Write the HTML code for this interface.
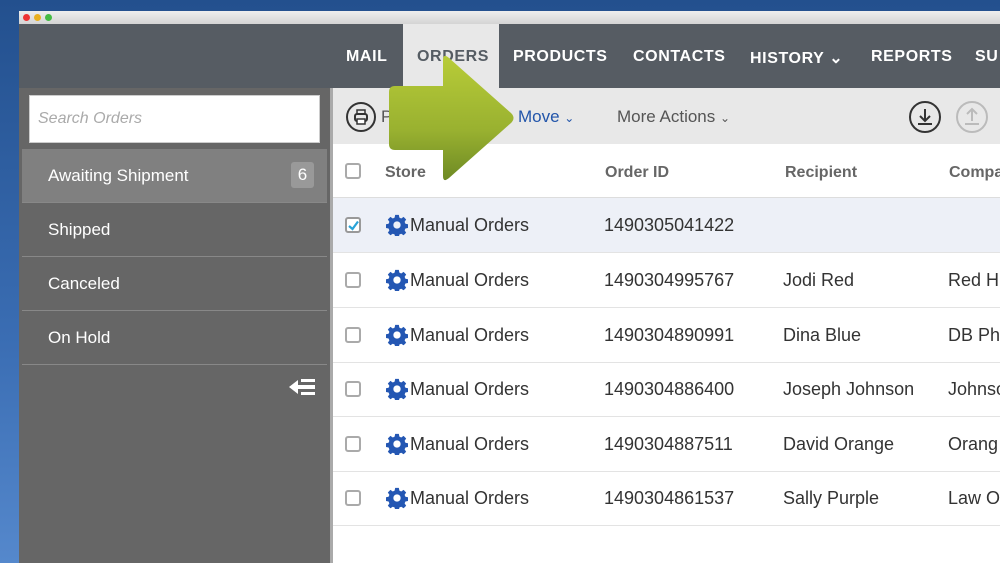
<!DOCTYPE html>
<html><head><style>
*{margin:0;padding:0;box-sizing:border-box}
html,body{width:1000px;height:563px;overflow:hidden}
body{position:relative;background:linear-gradient(#23508e,#3a6db3 60%,#5588cc);font-family:"Liberation Sans",sans-serif}
.win{position:absolute;left:19px;top:11px;width:981px;height:552px;background:#fff;overflow:hidden}
.title{position:absolute;left:0;top:0;width:100%;height:13px;background:linear-gradient(#eee,#d4d4d4)}
.dot{position:absolute;top:3px;width:7px;height:7px;border-radius:50%}
.nav{position:absolute;left:0;top:13px;width:100%;height:64px;background:#565c63}
.nav span{position:absolute;top:24px;color:#fff;font-weight:bold;font-size:16px;letter-spacing:0.6px}
.tab{position:absolute;left:384px;top:0;width:96px;height:64px;background:#e8e8e8}
.side{position:absolute;left:0;top:77px;width:311px;height:490px;background:#666}
.search{position:absolute;left:10px;top:7px;width:291px;height:48px;background:#fff;border:1px solid #ccc;color:#aaa;font-style:italic;font-size:16px;padding:14px 8px}
.item{position:absolute;left:3px;width:305px;height:54px;color:#fff;font-size:17px;padding:17px 26px;border-bottom:1px solid #888}
.badge{position:absolute;right:13px;top:13px;width:23px;height:26px;background:#999;border-radius:3px;text-align:center;line-height:26px}
.main{position:absolute;left:311px;top:77px;width:680px;height:490px;background:#fff;border-left:3px solid #aaa}
.tool{position:absolute;left:0;top:0;width:100%;height:56px;background:#e8e8e8;font-size:17px}
.hdr{position:absolute;top:56px;left:0;width:100%;height:54px;border-bottom:1px solid #ddd;font-weight:bold;color:#666;font-size:16px}
.row{position:absolute;left:0;width:100%;height:55px;border-bottom:1px solid #e3e3e3;font-size:18px;color:#333}
.cb{position:absolute;left:12px;top:19px;width:16px;height:16px;border:2px solid #aaa;border-radius:3px;background:#fff}
.c{position:absolute;top:17px}
.gear{position:absolute;left:53px;top:16px;width:22px;height:22px}
</style></head><body>
<div class="win">
<div class="title"><div class="dot" style="left:4px;background:#e33"></div><div class="dot" style="left:15px;background:#e9b020"></div><div class="dot" style="left:26px;background:#4b4"></div></div>
<div class="nav"><div class="tab"></div>
<span style="left:327px">MAIL</span><span style="left:398px;color:#555c63">ORDERS</span><span style="left:494px">PRODUCTS</span><span style="left:614px">CONTACTS</span><span style="left:731px">HISTORY ⌄</span><span style="left:852px">REPORTS</span><span style="left:956px">SU</span></div>
<div class="side">
<div class="search">Search Orders</div>
<div class="item" style="top:61px;background:#808080">Awaiting Shipment<div class="badge">6</div></div>
<div class="item" style="top:115px">Shipped</div>
<div class="item" style="top:169px">Canceled</div>
<div class="item" style="top:223px">On Hold</div>
<svg style="position:absolute;left:270px;top:290px" width="26" height="18"><path d="M0 9L9 2V16Z M8 7H26V11H8Z" fill="#fff"/><rect x="12" y="1" width="14" height="3" fill="#fff"/><rect x="12" y="14" width="14" height="3" fill="#fff"/></svg>
</div>
<div class="main">
<div class="tool">
<svg style="position:absolute;left:12px;top:13px" width="32" height="32"><circle cx="16" cy="16" r="14" fill="none" stroke="#333" stroke-width="2"/><rect x="10" y="13" width="12" height="7" rx="2" fill="none" stroke="#333" stroke-width="2"/><rect x="12" y="9" width="8" height="4" fill="none" stroke="#333" stroke-width="1.5"/><rect x="12" y="18" width="8" height="5" fill="#fff" stroke="#333" stroke-width="1.5"/></svg>
<span style="position:absolute;left:48px;top:19px;color:#555">P</span>
<span style="position:absolute;left:185px;top:19px;color:#2255aa">Move <small style="font-size:12px">⌄</small></span>
<span style="position:absolute;left:284px;top:19px;color:#555">More Actions <small style="font-size:12px">⌄</small></span>
<svg style="position:absolute;left:575px;top:12px" width="34" height="34"><circle cx="17" cy="17" r="15" fill="none" stroke="#333" stroke-width="2"/><path d="M17 9V21M12 16L17 21L22 16M10 24H24" fill="none" stroke="#333" stroke-width="2"/></svg>
<svg style="position:absolute;left:622px;top:12px" width="34" height="34"><circle cx="17" cy="17" r="15" fill="none" stroke="#bbb" stroke-width="2"/><path d="M17 21V9M12 14L17 9L22 14M10 24H24" fill="none" stroke="#bbb" stroke-width="2"/></svg>
</div>
<div class="hdr"><div class="cb" style="top:19px"></div><span class="c" style="left:52px;top:20px">Store</span><span class="c" style="left:272px;top:20px">Order ID</span><span class="c" style="left:452px;top:20px">Recipient</span><span class="c" style="left:616px;top:20px">Compa</span></div>
<div class="row" style="top:110px;background:#edf0f7"><div class="cb" style="border-color:#999"><svg style="position:absolute;left:1px;top:1px" width="11" height="11"><path d="M1 6L4.5 9L10 1.5" fill="none" stroke="#29a3d8" stroke-width="2.2"/></svg></div><svg class="gear" viewBox="0 0 24 24"><path fill="#2457b3" d="M10 1h4l.6 3 2 .9 2.6-1.7 2.8 2.8-1.7 2.6.9 2 3 .6v4l-3 .6-.9 2 1.7 2.6-2.8 2.8-2.6-1.7-2 .9-.6 3h-4l-.6-3-2-.9-2.6 1.7-2.8-2.8 1.7-2.6-.9-2-3-.6v-4l3-.6.9-2-1.7-2.6 2.8-2.8 2.6 1.7 2-.9zM12 8a4 4 0 100 8 4 4 0 000-8z"/></svg><span class="c" style="left:77px">Manual Orders</span><span class="c" style="left:271px">1490305041422</span></div>
<div class="row" style="top:165px"><div class="cb"></div><svg class="gear" viewBox="0 0 24 24"><path fill="#2457b3" d="M10 1h4l.6 3 2 .9 2.6-1.7 2.8 2.8-1.7 2.6.9 2 3 .6v4l-3 .6-.9 2 1.7 2.6-2.8 2.8-2.6-1.7-2 .9-.6 3h-4l-.6-3-2-.9-2.6 1.7-2.8-2.8 1.7-2.6-.9-2-3-.6v-4l3-.6.9-2-1.7-2.6 2.8-2.8 2.6 1.7 2-.9zM12 8a4 4 0 100 8 4 4 0 000-8z"/></svg><span class="c" style="left:77px">Manual Orders</span><span class="c" style="left:271px">1490304995767</span><span class="c" style="left:450px">Jodi Red</span><span class="c" style="left:615px">Red H</span></div>
<div class="row" style="top:220px"><div class="cb"></div><svg class="gear" viewBox="0 0 24 24"><path fill="#2457b3" d="M10 1h4l.6 3 2 .9 2.6-1.7 2.8 2.8-1.7 2.6.9 2 3 .6v4l-3 .6-.9 2 1.7 2.6-2.8 2.8-2.6-1.7-2 .9-.6 3h-4l-.6-3-2-.9-2.6 1.7-2.8-2.8 1.7-2.6-.9-2-3-.6v-4l3-.6.9-2-1.7-2.6 2.8-2.8 2.6 1.7 2-.9zM12 8a4 4 0 100 8 4 4 0 000-8z"/></svg><span class="c" style="left:77px">Manual Orders</span><span class="c" style="left:271px">1490304890991</span><span class="c" style="left:450px">Dina Blue</span><span class="c" style="left:615px">DB Ph</span></div>
<div class="row" style="top:274px"><div class="cb"></div><svg class="gear" viewBox="0 0 24 24"><path fill="#2457b3" d="M10 1h4l.6 3 2 .9 2.6-1.7 2.8 2.8-1.7 2.6.9 2 3 .6v4l-3 .6-.9 2 1.7 2.6-2.8 2.8-2.6-1.7-2 .9-.6 3h-4l-.6-3-2-.9-2.6 1.7-2.8-2.8 1.7-2.6-.9-2-3-.6v-4l3-.6.9-2-1.7-2.6 2.8-2.8 2.6 1.7 2-.9zM12 8a4 4 0 100 8 4 4 0 000-8z"/></svg><span class="c" style="left:77px">Manual Orders</span><span class="c" style="left:271px">1490304886400</span><span class="c" style="left:450px">Joseph Johnson</span><span class="c" style="left:615px">Johnso</span></div>
<div class="row" style="top:329px"><div class="cb"></div><svg class="gear" viewBox="0 0 24 24"><path fill="#2457b3" d="M10 1h4l.6 3 2 .9 2.6-1.7 2.8 2.8-1.7 2.6.9 2 3 .6v4l-3 .6-.9 2 1.7 2.6-2.8 2.8-2.6-1.7-2 .9-.6 3h-4l-.6-3-2-.9-2.6 1.7-2.8-2.8 1.7-2.6-.9-2-3-.6v-4l3-.6.9-2-1.7-2.6 2.8-2.8 2.6 1.7 2-.9zM12 8a4 4 0 100 8 4 4 0 000-8z"/></svg><span class="c" style="left:77px">Manual Orders</span><span class="c" style="left:271px">1490304887511</span><span class="c" style="left:450px">David Orange</span><span class="c" style="left:615px">Orang</span></div>
<div class="row" style="top:383px"><div class="cb"></div><svg class="gear" viewBox="0 0 24 24"><path fill="#2457b3" d="M10 1h4l.6 3 2 .9 2.6-1.7 2.8 2.8-1.7 2.6.9 2 3 .6v4l-3 .6-.9 2 1.7 2.6-2.8 2.8-2.6-1.7-2 .9-.6 3h-4l-.6-3-2-.9-2.6 1.7-2.8-2.8 1.7-2.6-.9-2-3-.6v-4l3-.6.9-2-1.7-2.6 2.8-2.8 2.6 1.7 2-.9zM12 8a4 4 0 100 8 4 4 0 000-8z"/></svg><span class="c" style="left:77px">Manual Orders</span><span class="c" style="left:271px">1490304861537</span><span class="c" style="left:450px">Sally Purple</span><span class="c" style="left:615px">Law O</span></div>
</div>
</div>
<svg style="position:absolute;left:385px;top:50px" width="135" height="140"><defs><linearGradient id="g" x1="0" y1="0" x2="0" y2="1"><stop offset="0" stop-color="#b8cc38"/><stop offset=".6" stop-color="#99b130"/><stop offset="1" stop-color="#6e8a24"/></linearGradient></defs><path d="M10 36H58V10Q58 3 64 8L126 63Q131 68 126 73L64 128Q58 133 58 126V100H10Q4 100 4 94V42Q4 36 10 36Z" fill="url(#g)"/></svg>
</body></html>
